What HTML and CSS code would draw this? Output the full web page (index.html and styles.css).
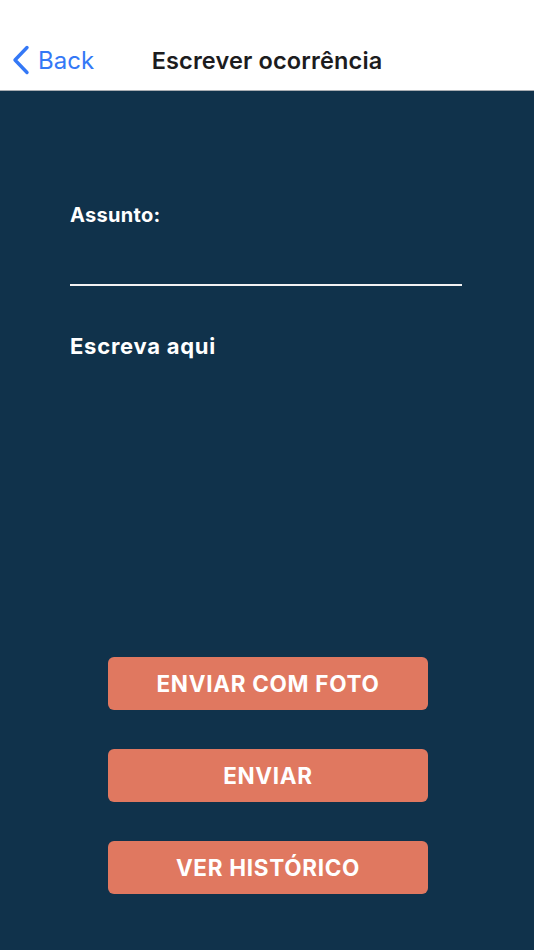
FILE: index.html
```html
<!DOCTYPE html>
<html lang="pt">
<head>
<meta charset="utf-8">
<title>Escrever ocorrência</title>
<link rel="stylesheet" href="styles.css">
</head>
<body>
<header class="navbar">
  <a class="back" href="#">
    <svg class="chevron" width="20" height="30" viewBox="0 0 20 30" aria-hidden="true">
      <path d="M16 2.5 L4 15 L16 27.5" fill="none" stroke="#3478f6" stroke-width="3.4" stroke-linecap="round" stroke-linejoin="round"/>
    </svg>
    <span>Back</span>
  </a>
  <h1 class="title">Escrever ocorrência</h1>
  <div class="spacer"></div>
</header>
<main class="content">
  <section class="form">
    <label class="label">Assunto:</label>
    <div class="subject-line"></div>
    <div class="placeholder">Escreva aqui</div>
  </section>
  <section class="actions">
    <button class="btn">ENVIAR COM FOTO</button>
    <button class="btn">ENVIAR</button>
    <button class="btn">VER HISTÓRICO</button>
  </section>
</main>
</body>
</html>
```
FILE: styles.css
```css
html, body {
  margin: 0;
  padding: 0;
}
body {
  width: 534px;
  height: 950px;
  background: #10324b;
  font-family: Inter, "Noto Sans", "Liberation Sans", sans-serif;
  overflow: hidden;
}
.navbar {
  box-sizing: border-box;
  height: 91px;
  padding-top: 30px;
  background: #ffffff;
  border-bottom: 1px solid #a9adb2;
  display: grid;
  grid-template-columns: 1fr auto 1fr;
  align-items: center;
}
.back {
  display: flex;
  align-items: center;
  gap: 7px;
  padding-left: 11px;
  color: #3478f6;
  text-decoration: none;
  font-size: 24px;
  font-weight: 400;
}
.chevron {
  display: block;
}
.title {
  margin: 0;
  font-size: 23.5px;
  font-weight: 600;
  color: #1c1c1e;
  letter-spacing: 0.15px;
}
.content {
  padding: 0 72px 0 70px;
}
.form {
  padding-top: 112px;
  display: flex;
  flex-direction: column;
}
.label {
  color: #ffffff;
  font-size: 20px;
  font-weight: 700;
  line-height: 24px;
  letter-spacing: 0.3px;
}
.subject-line {
  margin-top: 57px;
  height: 2px;
  background: #f2f2f2;
}
.placeholder {
  margin-top: 46px;
  color: #ffffff;
  font-size: 22px;
  font-weight: 700;
  line-height: 28px;
  letter-spacing: 0.75px;
}
.actions {
  margin-top: 297px;
  display: flex;
  flex-direction: column;
  align-items: center;
  gap: 39px;
  margin-left: -68px;
  margin-right: -72px;
}
.btn {
  width: 320px;
  height: 53px;
  border: none;
  border-radius: 6px;
  background: #e07860;
  color: #ffffff;
  font-family: Inter, "Noto Sans", "Liberation Sans", sans-serif;
  font-size: 22.5px;
  font-weight: 700;
  letter-spacing: 0.7px;
  padding: 0;
}
```
